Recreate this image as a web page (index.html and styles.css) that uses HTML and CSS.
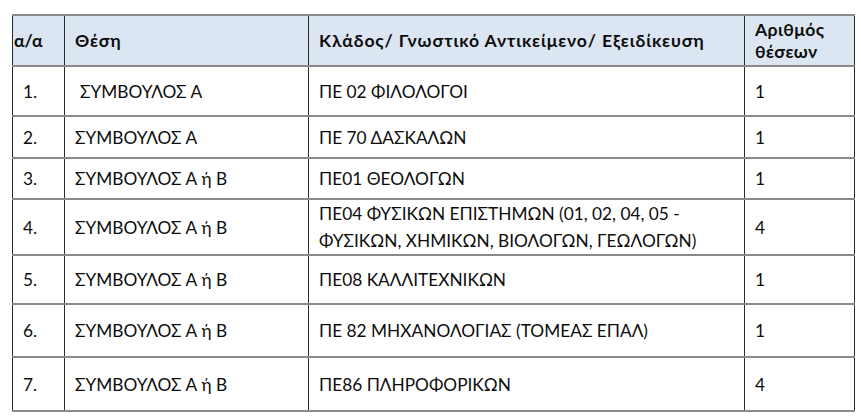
FILE: index.html
```html
<!DOCTYPE html>
<html lang="el">
<head>
<meta charset="utf-8">
<title>Θέσεις</title>
<link rel="stylesheet" href="styles.css">
</head>
<body>
<table class="posts">
  <colgroup>
    <col class="c-num">
    <col class="c-pos">
    <col class="c-spec">
    <col class="c-count">
  </colgroup>
  <thead>
    <tr class="head">
      <th class="num-h">α/α</th>
      <th>Θέση</th>
      <th>Κλάδος/ Γνωστικό Αντικείμενο/ Εξειδίκευση</th>
      <th class="count-h">Αριθμός θέσεων</th>
    </tr>
  </thead>
  <tbody>
    <tr class="r1"><td>1.</td><td class="indent">ΣΥΜΒΟΥΛΟΣ Α</td><td>ΠΕ 02 ΦΙΛΟΛΟΓΟΙ</td><td>1</td></tr>
    <tr class="r2"><td>2.</td><td>ΣΥΜΒΟΥΛΟΣ Α</td><td>ΠΕ 70 ΔΑΣΚΑΛΩΝ</td><td>1</td></tr>
    <tr class="r3"><td>3.</td><td>ΣΥΜΒΟΥΛΟΣ Α ή Β</td><td>ΠΕ01 ΘΕΟΛΟΓΩΝ</td><td>1</td></tr>
    <tr class="r4"><td>4.</td><td>ΣΥΜΒΟΥΛΟΣ Α ή Β</td><td class="two">ΠΕ04 ΦΥΣΙΚΩΝ ΕΠΙΣΤΗΜΩΝ (01, 02, 04, 05 -<br>ΦΥΣΙΚΩΝ, ΧΗΜΙΚΩΝ, ΒΙΟΛΟΓΩΝ, ΓΕΩΛΟΓΩΝ)</td><td>4</td></tr>
    <tr class="r5"><td>5.</td><td>ΣΥΜΒΟΥΛΟΣ Α ή Β</td><td>ΠΕ08 ΚΑΛΛΙΤΕΧΝΙΚΩΝ</td><td>1</td></tr>
    <tr class="r6"><td>6.</td><td>ΣΥΜΒΟΥΛΟΣ Α ή Β</td><td>ΠΕ 82 ΜΗΧΑΝΟΛΟΓΙΑΣ (ΤΟΜΕΑΣ ΕΠΑΛ)</td><td>1</td></tr>
    <tr class="r7"><td>7.</td><td>ΣΥΜΒΟΥΛΟΣ Α ή Β</td><td>ΠΕ86 ΠΛΗΡΟΦΟΡΙΚΩΝ</td><td>4</td></tr>
  </tbody>
</table>
</body>
</html>
```
FILE: styles.css
```css
html, body {
  margin: 0;
  padding: 0;
  background: #ffffff;
}

body {
  font-family: "Lato", "Open Sans", "Liberation Sans", sans-serif;
  color: #0d0d0d;
}

.posts {
  margin: 14px 0 0 12px;
  width: 842px;
  border-collapse: collapse;
  table-layout: fixed;
  font-size: 17.3px;
}

.c-num { width: 52px; }
.c-pos { width: 244px; }
.c-spec { width: 436px; }
.c-count { width: 110px; }

.posts th,
.posts td {
  text-align: left;
  vertical-align: middle;
  padding: 0 10px;
  border-left: 1.5px solid #2a2a2a;
  border-right: 1.5px solid #2a2a2a;
  border-top: 2px solid #8a8a8a;
  border-bottom: 2px solid #8a8a8a;
  white-space: nowrap;
}

.posts th {
  background: #dce6f2;
  font-weight: 700;
  font-size: 17.6px;
  letter-spacing: 0.85px;
  line-height: 22px;
}

.posts th.num-h {
  padding-left: 1px;
  letter-spacing: 0;
}

.posts th.count-h {
  white-space: normal;
  letter-spacing: 0.4px;
}

.posts td.indent {
  padding-left: 15px;
}

.posts td.two {
  line-height: 27px;
}

.head { height: 51px; }
.r1 { height: 50px; }
.r2 { height: 42px; }
.r3 { height: 41px; }
.r4 { height: 51px; }
.r5 { height: 49px; }
.r6 { height: 53px; }
.r7 { height: 54px; }
```
